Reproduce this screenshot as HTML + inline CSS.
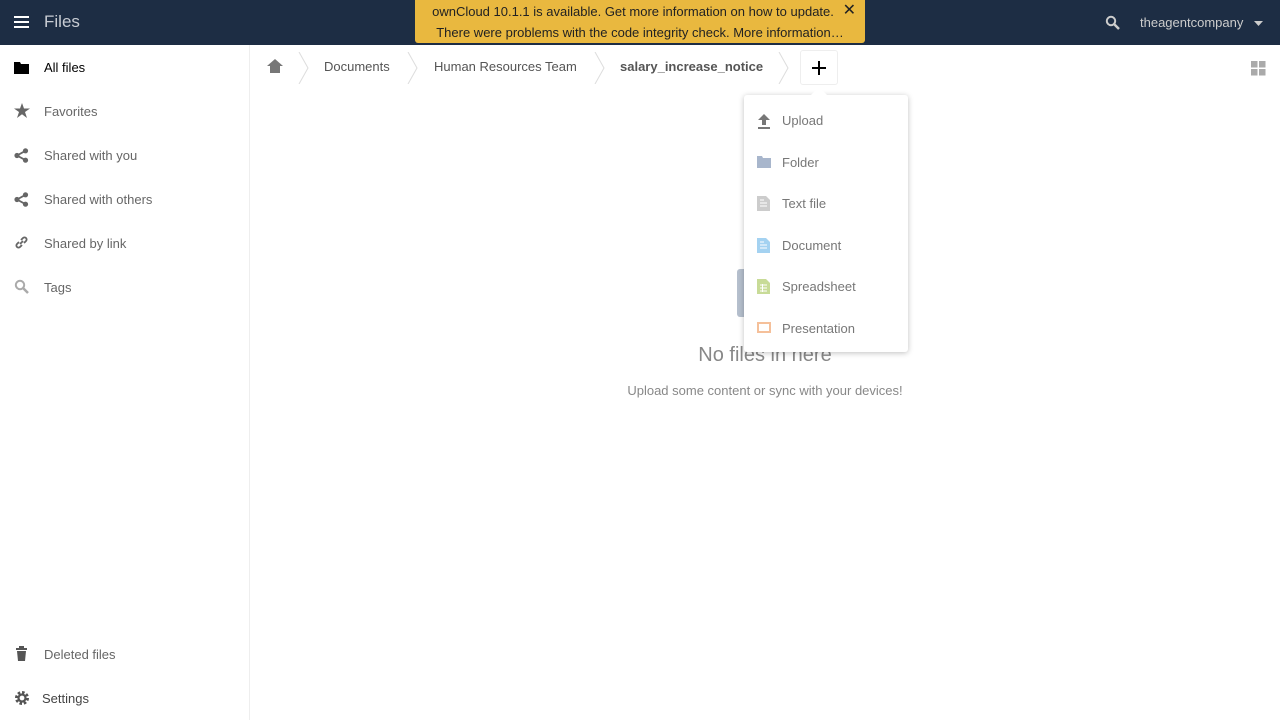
<!DOCTYPE html>
<html><head><meta charset="utf-8"><style>
*{box-sizing:border-box;margin:0;padding:0}
body{width:1280px;height:720px;overflow:hidden;font-family:"Liberation Sans","DejaVu Sans",sans-serif;font-size:13px;color:#555;background:#fff;position:relative}
#hdr{position:absolute;left:0;top:0;width:1280px;height:45px;background:#1d2d44}
.abs{position:absolute}
#side{position:absolute;left:0;top:45px;width:250px;height:675px;border-right:1px solid #eee}
.nav{position:absolute;left:44px;font-size:13px;color:#666}
.ic{position:absolute;left:14px}
.crumb{position:absolute;top:59px;font-size:13px;color:#555}
.chev{position:absolute;top:52px}
.menu{position:absolute;left:744px;top:95px;width:164px;height:257px;background:#fff;border-radius:3px;box-shadow:0 1px 6px rgba(0,0,0,.25)}
.mi{position:absolute;left:38px;color:#777;font-size:13px}
.mic{position:absolute;left:13px}
</style></head><body>
<div id="hdr">
 <svg class="abs" style="left:14px;top:16px" width="16" height="13"><rect y="0" width="15" height="2" fill="#fff"/><rect y="5" width="15" height="2" fill="#fff"/><rect y="10" width="15" height="2" fill="#fff"/></svg>
 <div class="abs" style="left:44px;top:12px;color:#c8ccd3;font-size:17px">Files</div>
 <svg class="abs" style="left:1105px;top:15px" width="15" height="15"><circle cx="6" cy="6" r="4.2" stroke="#ccc" stroke-width="2" fill="none"/><path d="M9 9 L14 14" stroke="#ccc" stroke-width="2.5"/></svg>
 <div class="abs" style="left:1140px;top:15px;color:#ccc;font-size:13px">theagentcompany</div>
 <svg class="abs" style="left:1254px;top:21px" width="9" height="5"><path d="M0 0H9L4.5 5Z" fill="#ccc"/></svg>
</div>
<div class="abs" style="left:415px;top:0;width:450px;height:43px;background:#e9b83f;border-radius:0 0 3px 3px;color:#222;font-size:13px;text-align:center;line-height:21px;padding:1px 14px 0 0">
 <div>ownCloud 10.1.1 is available. Get more information on how to update.</div>
 <div style="margin-right:-14px">There were problems with the code integrity check. More information…</div>
 <div class="abs" style="right:9px;top:0px;font-size:16px;font-weight:bold">✕</div>
</div>
<div id="side">
 <svg class="ic" style="top:17px" width="15" height="12"><path d="M0 0H6L7 2H15V12H0Z" fill="#000"/></svg>
 <div class="nav" style="top:15px;color:#000">All files</div>
 <svg class="ic" style="top:58px" width="16" height="15"><path d="M8 0L10 5.5H16L11 9L13 15L8 11.3L3 15L5 9L0 5.5H6Z" fill="#666"/></svg>
 <div class="nav" style="top:59px">Favorites</div>
 <svg class="ic" style="top:103px" width="15" height="15"><circle cx="3" cy="7.5" r="2.6" fill="#666"/><circle cx="11.5" cy="2.8" r="2.6" fill="#666"/><circle cx="11.5" cy="12.2" r="2.6" fill="#666"/><path d="M3 7.5L11.5 2.8M3 7.5L11.5 12.2" stroke="#666" stroke-width="1.8"/></svg>
 <div class="nav" style="top:103px">Shared with you</div>
 <svg class="ic" style="top:147px" width="15" height="15"><circle cx="3" cy="7.5" r="2.6" fill="#666"/><circle cx="11.5" cy="2.8" r="2.6" fill="#666"/><circle cx="11.5" cy="12.2" r="2.6" fill="#666"/><path d="M3 7.5L11.5 2.8M3 7.5L11.5 12.2" stroke="#666" stroke-width="1.8"/></svg>
 <div class="nav" style="top:147px">Shared with others</div>
 <svg class="ic" style="top:190px" width="15" height="15"><path d="M6 9L9 6M5 7L3 9A2 2 0 0 0 6 12L8 10M10 8L12 6A2 2 0 0 0 9 3L7 5" stroke="#666" stroke-width="1.8" fill="none"/></svg>
 <div class="nav" style="top:191px">Shared by link</div>
 <svg class="ic" style="top:234px" width="15" height="15"><circle cx="6" cy="6" r="4.2" stroke="#aaa" stroke-width="2" fill="none"/><path d="M9 9L14 14" stroke="#aaa" stroke-width="2.5"/></svg>
 <div class="nav" style="top:235px">Tags</div>
 <svg class="ic" style="top:601px" width="15" height="15"><path d="M2 2H13V4H2ZM5 0H10V2H5ZM3 5H12L11 15H4Z" fill="#555"/></svg>
 <div class="nav" style="top:602px">Deleted files</div>
 <svg class="ic" style="top:645px" width="16" height="16"><circle cx="8" cy="8" r="5.5" fill="none" stroke="#555" stroke-width="3" stroke-dasharray="2.5 1.8"/><circle cx="8" cy="8" r="3.5" fill="none" stroke="#555" stroke-width="2.2"/></svg>
 <div class="nav" style="top:646px;left:42px;color:#444">Settings</div>
</div>
<svg class="abs" style="left:267px;top:59px" width="16" height="14"><path d="M8 0L16 7H13V14H3V7H0Z" fill="#777"/></svg>
<svg class="chev" width="12" height="32" style="left:298px"><path d="M1 0L10 16L1 32" stroke="#ddd" fill="none"/></svg>
<div class="crumb" style="left:324px">Documents</div>
<svg class="chev" width="12" height="32" style="left:407px"><path d="M1 0L10 16L1 32" stroke="#ddd" fill="none"/></svg>
<div class="crumb" style="left:434px">Human Resources Team</div>
<svg class="chev" width="12" height="32" style="left:594px"><path d="M1 0L10 16L1 32" stroke="#ddd" fill="none"/></svg>
<div class="crumb" style="left:620px;font-weight:bold">salary_increase_notice</div>
<svg class="chev" width="12" height="32" style="left:778px"><path d="M1 0L10 16L1 32" stroke="#ddd" fill="none"/></svg>
<div class="abs" style="left:800px;top:50px;width:38px;height:35px;border:1px solid #eee;border-radius:3px"></div>
<svg class="abs" style="left:812px;top:61px" width="14" height="14"><path d="M7 0V14M0 7H14" stroke="#000" stroke-width="2"/></svg>
<svg class="abs" style="left:1251px;top:61px" width="15" height="15"><rect width="6.5" height="6.5" fill="#aaa"/><rect x="8" width="6.5" height="6.5" fill="#aaa"/><rect y="8" width="6.5" height="6.5" fill="#aaa"/><rect x="8" y="8" width="6.5" height="6.5" fill="#aaa"/></svg>
<div class="abs" style="left:737px;top:269px;width:10px;height:48px;background:#b5bfcd;border-radius:3px"></div>
<div class="abs" style="left:623px;top:344px;width:284px;text-align:center;font-size:20px;color:#888">No files in here</div>
<div class="abs" style="left:603px;top:383px;width:324px;text-align:center;font-size:13px;color:#888">Upload some content or sync with your devices!</div>
<div class="menu">
 <svg class="abs" style="left:66px;top:-9px" width="18" height="10"><path d="M0 10L9 1L18 10Z" fill="#fff"/></svg>
 <svg class="mic" style="top:19px" width="14" height="15"><path d="M7 0L13 6H9V11H5V6H1Z M1 13H13V15H1Z" fill="#777"/></svg>
 <div class="mi" style="top:18px">Upload</div>
 <svg class="mic" style="top:61px" width="14" height="12"><path d="M0 0H5L6 2H14V12H0Z" fill="#a8b6cc"/></svg>
 <div class="mi" style="top:60px">Folder</div>
 <svg class="mic" style="top:101px" width="13" height="15"><path d="M0 0H9L13 4V15H0Z" fill="#ccc"/><path d="M3 4H7M3 7H10M3 10H10" stroke="#fff"/></svg>
 <div class="mi" style="top:101px">Text file</div>
 <svg class="mic" style="top:143px" width="13" height="15"><path d="M0 0H9L13 4V15H0Z" fill="#a4d2f1"/><path d="M3 4H7M3 7H10M3 10H10" stroke="#fff"/></svg>
 <div class="mi" style="top:143px">Document</div>
 <svg class="mic" style="top:184px" width="13" height="15"><path d="M0 0H9L13 4V15H0Z" fill="#c8db97"/><path d="M3 6H10M3 9H10M3 12H10M5.5 5V13" stroke="#fff"/></svg>
 <div class="mi" style="top:184px">Spreadsheet</div>
 <svg class="mic" style="top:227px" width="14" height="11"><rect x="1" y="1" width="12" height="9" fill="none" stroke="#f5c09a" stroke-width="2"/></svg>
 <div class="mi" style="top:226px">Presentation</div>
</div>
</body></html>
